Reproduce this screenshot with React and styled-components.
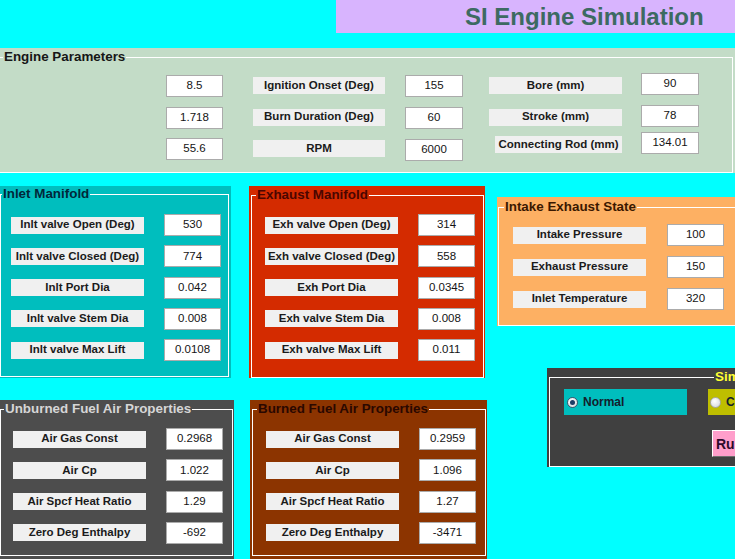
import React from "react";
import styled, { createGlobalStyle } from "styled-components";

const GlobalStyle = createGlobalStyle`
  html, body { margin: 0; padding: 0; background: #00ffff; overflow: hidden; }
  body { font-family: "Liberation Sans", Arial, sans-serif; }
`;

const Page = styled.div`
  width: 735px;
  height: 559px;
  overflow: hidden;
  display: flex;
  flex-direction: column;
  background: #00ffff;
`;

const TitleBar = styled.div`
  margin-left: 336px;
  height: 33px;
  flex: none;
  background: #d8b4fe;
  color: #3d6a62;
  font: 700 24px/33px "Liberation Sans", Arial, sans-serif;
  padding-left: 129px;
  white-space: nowrap;
`;

const Panel = styled.div`
  flex: none;
  background: ${(p) => p.$bg};
  width: ${(p) => p.$w}px;
  height: ${(p) => p.$h}px;
  margin: ${(p) => p.$m || "0"};
`;

const Frame = styled.div`
  position: relative;
  box-sizing: border-box;
  background: inherit;
  border: 1px solid ${(p) => p.$line || "#ffffff"};
  width: ${(p) => p.$w}px;
  height: ${(p) => p.$h}px;
  margin: ${(p) => p.$m || "0"};
`;

const Legend = styled.div`
  position: absolute;
  top: -9px;
  left: ${(p) => p.$left}px;
  padding: 0 1px;
  background: inherit;
  color: ${(p) => p.$color};
  font: 700 13.4px/16px "Liberation Sans", Arial, sans-serif;
  white-space: nowrap;
`;

const FieldGrid = styled.div`
  display: grid;
  grid-template-columns: 133px 57px;
  grid-auto-rows: 22px;
  align-items: center;
  column-gap: ${(p) => p.$cg}px;
  row-gap: ${(p) => p.$rg}px;
  padding: ${(p) => p.$pad};
`;

const Label = styled.div`
  box-sizing: border-box;
  width: ${(p) => p.$w || 133}px;
  height: 17px;
  margin-top: ${(p) => p.$mt || 0}px;
  display: flex;
  align-items: center;
  justify-content: center;
  background: #f0f0f0;
  color: #1b1b1b;
  font: 700 11.5px/1 "Liberation Sans", Arial, sans-serif;
  white-space: nowrap;
`;

const Edit = styled.div`
  box-sizing: border-box;
  width: ${(p) => p.$w || 57}px;
  height: 22px;
  margin-top: ${(p) => p.$mt || 0}px;
  display: flex;
  align-items: center;
  justify-content: center;
  background: #ffffff;
  border: 1px solid #ababab;
  color: #141414;
  font: 400 11.5px/1 "Liberation Sans", Arial, sans-serif;
`;

const EngineRow = styled.div`
  display: flex;
  align-items: flex-start;
`;

const Column = styled.div`
  display: flex;
  flex-direction: column;
  align-items: ${(p) => p.$align || "flex-start"};
  margin-left: ${(p) => p.$ml}px;
  margin-top: ${(p) => p.$mt}px;
  gap: ${(p) => p.$gap}px;
`;

const MainArea = styled.div`
  display: flex;
  align-items: flex-start;
  margin-top: 13px;
`;

const LeftArea = styled.div`
  flex: none;
  width: 487px;
  display: flex;
  flex-direction: column;
`;

const PanelRow = styled.div`
  display: flex;
  align-items: flex-start;
  margin-top: ${(p) => p.$mt || 0}px;
`;

const RightArea = styled.div`
  flex: 1;
  margin-left: 10px;
  display: flex;
  flex-direction: column;
  align-items: flex-start;
`;

const SimGrid = styled.div`
  display: grid;
  grid-template-columns: 123px 120px;
  column-gap: 21px;
  row-gap: 15px;
  padding: 11px 0 0 14px;
`;

const RadioBox = styled.div`
  box-sizing: border-box;
  height: 26px;
  display: flex;
  align-items: center;
  gap: 5px;
  padding-left: ${(p) => p.$pl}px;
  background: ${(p) => p.$bg};
  color: #13202c;
  font: 700 12px/1 "Liberation Sans", Arial, sans-serif;
  white-space: nowrap;
  overflow: hidden;
`;

const RadioDot = styled.span`
  position: relative;
  flex: none;
  box-sizing: border-box;
  width: 11px;
  height: 11px;
  border-radius: 50%;
  border: 1px solid ${(p) => (p.$on ? "#3e5670" : "#a8a8a8")};
  background: radial-gradient(circle at 40% 35%, #ffffff, #cfd3d8);
  &::after {
    content: "";
    display: ${(p) => (p.$on ? "block" : "none")};
    position: absolute;
    left: 2px;
    top: 2px;
    width: 5px;
    height: 5px;
    border-radius: 50%;
    background: #1d3d66;
  }
`;

const RunButton = styled.button`
  grid-column: 2;
  justify-self: start;
  margin-left: 4px;
  width: 40px;
  height: 27px;
  padding: 0 0 0 3px;
  text-align: left;
  background: #ff9ecb;
  border: 1px solid;
  border-color: #ffffff #6f6f6f #6f6f6f #ffffff;
  color: #2d0a2a;
  font: 700 14px/1 "Liberation Sans", Arial, sans-serif;
  white-space: nowrap;
`;

const inlet = [
  ["Inlt valve Open (Deg)", "530"],
  ["Inlt valve Closed (Deg)", "774"],
  ["Inlt Port Dia", "0.042"],
  ["Inlt valve Stem Dia", "0.008"],
  ["Inlt valve Max Lift", "0.0108"],
];

const exhaust = [
  ["Exh valve Open (Deg)", "314"],
  ["Exh valve Closed (Deg)", "558"],
  ["Exh Port Dia", "0.0345"],
  ["Exh valve Stem Dia", "0.008"],
  ["Exh valve Max Lift", "0.011"],
];

const intake = [
  ["Intake Pressure", "100"],
  ["Exhaust Pressure", "150"],
  ["Inlet Temperature", "320"],
];

const unburned = [
  ["Air Gas Const", "0.2968"],
  ["Air Cp", "1.022"],
  ["Air Spcf Heat Ratio", "1.29"],
  ["Zero Deg Enthalpy", "-692"],
];

const burned = [
  ["Air Gas Const", "0.2959"],
  ["Air Cp", "1.096"],
  ["Air Spcf Heat Ratio", "1.27"],
  ["Zero Deg Enthalpy", "-3471"],
];

function Fields({ rows, pad, cg = 20, rg = 9.3 }) {
  return (
    <FieldGrid $pad={pad} $cg={cg} $rg={rg}>
      {rows.map(([label, value]) => (
        <React.Fragment key={label}>
          <Label>{label}</Label>
          <Edit>{value}</Edit>
        </React.Fragment>
      ))}
    </FieldGrid>
  );
}

export default function App() {
  return (
    <Page>
      <GlobalStyle />
      <TitleBar>SI Engine Simulation</TitleBar>

      <Panel $bg="#c3dcc7" $w={735} $h={125} $m="15px 0 0 0">
        <Frame $w={734} $h={116} $m="9px 0 0 -1px">
          <Legend $left={3} $color="#161616">Engine Parameters</Legend>
          <EngineRow>
            <Column $ml={166} $mt={17} $gap={9.5}>
              <Edit>8.5</Edit>
              <Edit>1.718</Edit>
              <Edit>55.6</Edit>
            </Column>
            <Column $ml={30} $mt={19} $gap={14.5}>
              <Label $w={132}>Ignition Onset (Deg)</Label>
              <Label $w={132}>Burn Duration (Deg)</Label>
              <Label $w={132}>RPM</Label>
            </Column>
            <Column $ml={20} $mt={17} $gap={9.5}>
              <Edit $w={58}>155</Edit>
              <Edit $w={58}>60</Edit>
              <Edit $w={58} $mt={0.5}>6000</Edit>
            </Column>
            <Column $ml={26} $mt={19} $gap={14.5} $align="flex-end">
              <Label>Bore (mm)</Label>
              <Label>Stroke (mm)</Label>
              <Label $w={127} $mt={-4}>Connecting Rod (mm)</Label>
            </Column>
            <Column $ml={19} $mt={15} $gap={10}>
              <Edit $w={58}>90</Edit>
              <Edit $w={58}>78</Edit>
              <Edit $w={58} $mt={-5}>134.01</Edit>
            </Column>
          </EngineRow>
        </Frame>
      </Panel>

      <MainArea>
        <LeftArea>
          <PanelRow>
            <Panel $bg="#00bebe" $w={231} $h={192}>
              <Frame $w={229} $h={183} $m="8px 0 0 0">
                <Legend $left={1} $color="#00283a">Inlet Manifold</Legend>
                <Fields rows={inlet} pad="19px 0 0 10px" />
              </Frame>
            </Panel>
            <Panel $bg="#d42b00" $w={236} $h={192} $m="0 0 0 18px">
              <Frame $w={233} $h={183} $m="9px 0 0 2px">
                <Legend $left={4} $color="#4a0600">Exhaust Manifold</Legend>
                <Fields rows={exhaust} pad="18px 0 0 13px" />
              </Frame>
            </Panel>
          </PanelRow>
          <PanelRow $mt={22}>
            <Panel $bg="#4d4d4d" $w={234} $h={159}>
              <Frame $w={233} $h={147} $m="9px 0 0 0">
                <Legend $left={3} $color="#d6d6d6">Unburned Fuel Air Properties</Legend>
                <Fields rows={unburned} pad="18px 0 0 12px" />
              </Frame>
            </Panel>
            <Panel $bg="#8c3400" $w={237} $h={159} $m="0 0 0 16px">
              <Frame $w={234} $h={147} $m="9px 0 0 2px">
                <Legend $left={4} $color="#2a0800">Burned Fuel Air Properties</Legend>
                <Fields rows={burned} pad="18px 0 0 13px" />
              </Frame>
            </Panel>
          </PanelRow>
        </LeftArea>

        <RightArea>
          <Panel $bg="#fdb063" $w={238} $h={129} $m="11px 0 0 0">
            <Frame $w={260} $h={119} $m="10px 0 0 1px">
              <Legend $left={5} $color="#3a1800">Intake Exhaust State</Legend>
              <Fields rows={intake} pad="16px 0 0 14px" cg={21} rg={10} />
            </Frame>
          </Panel>
          <Panel $bg="#404040" $w={188} $h={99} $m="42px 0 0 50px">
            <Frame $w={220} $h={90} $m="9px 0 0 2px">
              <Legend $left={164} $color="#ffff33">Simulation Type</Legend>
              <SimGrid>
                <RadioBox $bg="#00bebe" $pl={3}>
                  <RadioDot $on />
                  Normal
                </RadioBox>
                <RadioBox $bg="#bebe00" $pl={2}>
                  <RadioDot />
                  Combustion
                </RadioBox>
                <RunButton>Run</RunButton>
              </SimGrid>
            </Frame>
          </Panel>
        </RightArea>
      </MainArea>
    </Page>
  );
}
